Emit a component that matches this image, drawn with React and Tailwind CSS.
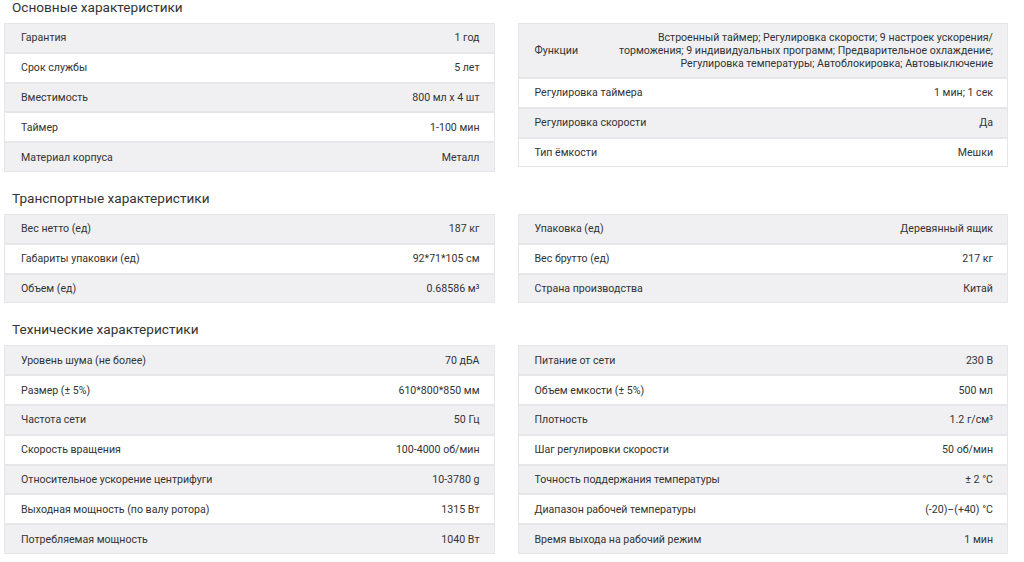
const sections = [
  {
    title: "Основные характеристики",
    left: [
      ["Гарантия", "1 год"],
      ["Срок службы", "5 лет"],
      ["Вместимость", "800 мл x 4 шт"],
      ["Таймер", "1-100 мин"],
      ["Материал корпуса", "Металл"],
    ],
    right: [
      [
        "Функции",
        <>
          Встроенный таймер; Регулировка скорости; 9 настроек ускорения/
          <br />
          торможения; 9 индивидуальных программ; Предварительное охлаждение;
          <br />
          Регулировка температуры; Автоблокировка; Автовыключение
        </>,
      ],
      ["Регулировка таймера", "1 мин; 1 сек"],
      ["Регулировка скорости", "Да"],
      ["Тип ёмкости", "Мешки"],
    ],
  },
  {
    title: "Транспортные характеристики",
    left: [
      ["Вес нетто (ед)", "187 кг"],
      ["Габариты упаковки (ед)", "92*71*105 см"],
      ["Объем (ед)", "0.68586 м³"],
    ],
    right: [
      ["Упаковка (ед)", "Деревянный ящик"],
      ["Вес брутто (ед)", "217 кг"],
      ["Страна производства", "Китай"],
    ],
  },
  {
    title: "Технические характеристики",
    left: [
      ["Уровень шума (не более)", "70 дБА"],
      ["Размер (± 5%)", "610*800*850 мм"],
      ["Частота сети", "50 Гц"],
      ["Скорость вращения", "100-4000 об/мин"],
      ["Относительное ускорение центрифуги", "10-3780 g"],
      ["Выходная мощность (по валу ротора)", "1315 Вт"],
      ["Потребляемая мощность", "1040 Вт"],
    ],
    right: [
      ["Питание от сети", "230 В"],
      ["Объем емкости (± 5%)", "500 мл"],
      ["Плотность", "1.2 г/см³"],
      ["Шаг регулировки скорости", "50 об/мин"],
      ["Точность поддержания температуры", "± 2 °C"],
      ["Диапазон рабочей температуры", "(-20)–(+40) °C"],
      ["Время выхода на рабочий режим", "1 мин"],
    ],
  },
];

function SpecTable({ rows }) {
  return (
    <div className="flex flex-col gap-[2px] bg-[#e6e6e9] p-[1px]">
      {rows.map(([label, value], i) => (
        <div
          key={label}
          className={`flex items-center justify-between gap-4 pl-[16px] pr-[14px] text-[10.6px] leading-[13px] text-[#333] ${
            i % 2 === 0 ? "bg-[#f0f0f2]" : "bg-white"
          } ${typeof value === "string" ? "h-[27.8px]" : "py-[7px]"}`}
        >
          <span className="shrink-0">{label}</span>
          <span className="text-right">{value}</span>
        </div>
      ))}
    </div>
  );
}

export default function App() {
  return (
    <main
      className="min-h-screen bg-white pl-[4px] pr-[16px] text-[#333]"
      style={{ fontFamily: "Roboto, 'Liberation Sans', sans-serif" }}
    >
      {sections.map((s, i) => (
        <section key={s.title} className={i === 0 ? "-mt-[2px]" : "mt-[17px]"}>
          <h2 className="pl-[8px] text-[13.6px] leading-[18px] mb-[7px] text-[#333]">
            {s.title}
          </h2>
          <div className="grid grid-cols-2 items-start gap-[23px]">
            <SpecTable rows={s.left} />
            <SpecTable rows={s.right} />
          </div>
        </section>
      ))}
    </main>
  );
}
